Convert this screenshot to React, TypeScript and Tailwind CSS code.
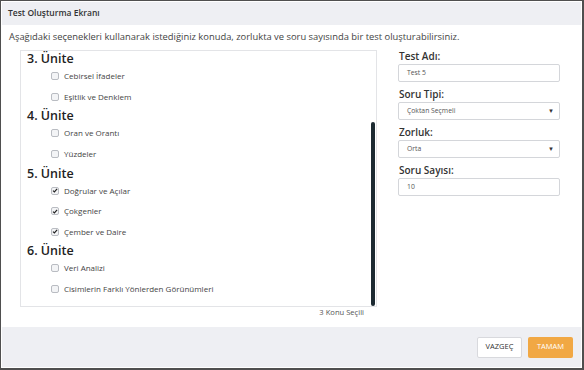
import React from "react";

const font = { fontFamily: '"Open Sans", "Noto Sans", sans-serif' };

function Box({ checked }: { checked?: boolean }) {
  return (
    <span className="w-[8px] h-[8px] rounded-[2px] border border-[#b9bcc2] bg-[#f3f4f6] flex items-center justify-center shrink-0">
      {checked && (
        <svg width="7" height="7" viewBox="0 0 8 8">
          <path d="M1.3 4.2 L3.2 6 L6.8 1.8" stroke="#222" strokeWidth="1.6" fill="none" />
        </svg>
      )}
    </span>
  );
}

function Item({ label, checked }: { label: string; checked?: boolean }) {
  return (
    <div className="h-[20.6px] flex items-center pl-[24px] gap-[5px] text-[8px] text-[#444]">
      <Box checked={checked} />
      <span>{label}</span>
    </div>
  );
}

function Heading({ t }: { t: string }) {
  return <div className="h-[13px] mt-[3px] flex items-center text-[12.5px] font-semibold text-[#222] leading-none">{t}</div>;
}

function Field({ label, value, select }: { label: string; value: string; select?: boolean }) {
  return (
    <div className="flex flex-col">
      <div className="text-[10px] font-semibold text-[#333] h-[14px] flex items-center pl-[1px]">{label}</div>
      <div className="mt-[1px] h-[18px] border border-[#d4d6da] rounded-[2px] bg-white flex items-center justify-between pl-[8px] pr-[5px] text-[6.8px] text-[#555]">
        <span>{value}</span>
        {select && <span className="text-[6px] text-[#333]">▼</span>}
      </div>
    </div>
  );
}

export default function App() {
  return (
    <div style={font} className="w-[584px] h-[370px] bg-[#4f4f4f] pt-[1px] pl-[1px] pr-[2px] pb-[2px]">
      <div className="w-full h-full bg-white flex flex-col p-[1px]">
        <div className="h-[23px] bg-[#eeeff3] flex items-center px-[6px] text-[8.5px] font-semibold text-[#333] shrink-0">
          Test Oluşturma Ekranı
        </div>
        <div className="flex-1 flex flex-col">
          <div className="h-[25px] flex items-center pl-[7px] text-[9.4px] text-[#444]">
            Aşağıdaki seçenekleri kullanarak istediğiniz konuda, zorlukta ve soru sayısında bir test oluşturabilirsiniz.
          </div>
          <div className="flex">
            <div className="flex flex-col ml-[18px]">
              <div className="relative w-[357px] h-[257px] border border-[#e3e4e7] overflow-hidden pl-[6px]">
                <div className="-mt-[1px]">
                  <Heading t="3. Ünite" />
                  <Item label="Cebirsel İfadeler" />
                  <Item label="Eşitlik ve Denklem" />
                  <Heading t="4. Ünite" />
                  <Item label="Oran ve Orantı" />
                  <Item label="Yüzdeler" />
                  <Heading t="5. Ünite" />
                  <Item label="Doğrular ve Açılar" checked />
                  <Item label="Çokgenler" checked />
                  <Item label="Çember ve Daire" checked />
                  <Heading t="6. Ünite" />
                  <Item label="Veri Analizi" />
                  <Item label="Cisimlerin Farklı Yönlerden Görünümleri" />
                </div>
                <div className="absolute right-[1px] top-[71px] w-[4px] h-[184px] rounded-[2px] bg-[#1c2a31]" />
              </div>
              <div className="h-[12px] flex items-center justify-end pr-[13px] text-[7.6px] text-[#555]">3 Konu Seçili</div>
            </div>
            <div className="ml-[21px] w-[162px] flex flex-col gap-[5px] -mt-[1px]">
              <Field label="Test Adı:" value="Test 5" />
              <Field label="Soru Tipi:" value="Çoktan Seçmeli" select />
              <Field label="Zorluk:" value="Orta" select />
              <Field label="Soru Sayısı:" value="10" />
            </div>
          </div>
        </div>
        <div className="h-[40px] bg-[#eeeff3] flex items-center justify-end gap-[6px] pr-[8px] shrink-0">
          <div className="w-[45px] h-[21px] bg-white border border-[#d8d9dd] rounded-[2px] flex items-center justify-center text-[7.5px] text-[#333]">VAZGEÇ</div>
          <div className="w-[45px] h-[21px] bg-[#f1a844] rounded-[2px] flex items-center justify-center text-[7.5px] text-white">TAMAM</div>
        </div>
      </div>
    </div>
  );
}
